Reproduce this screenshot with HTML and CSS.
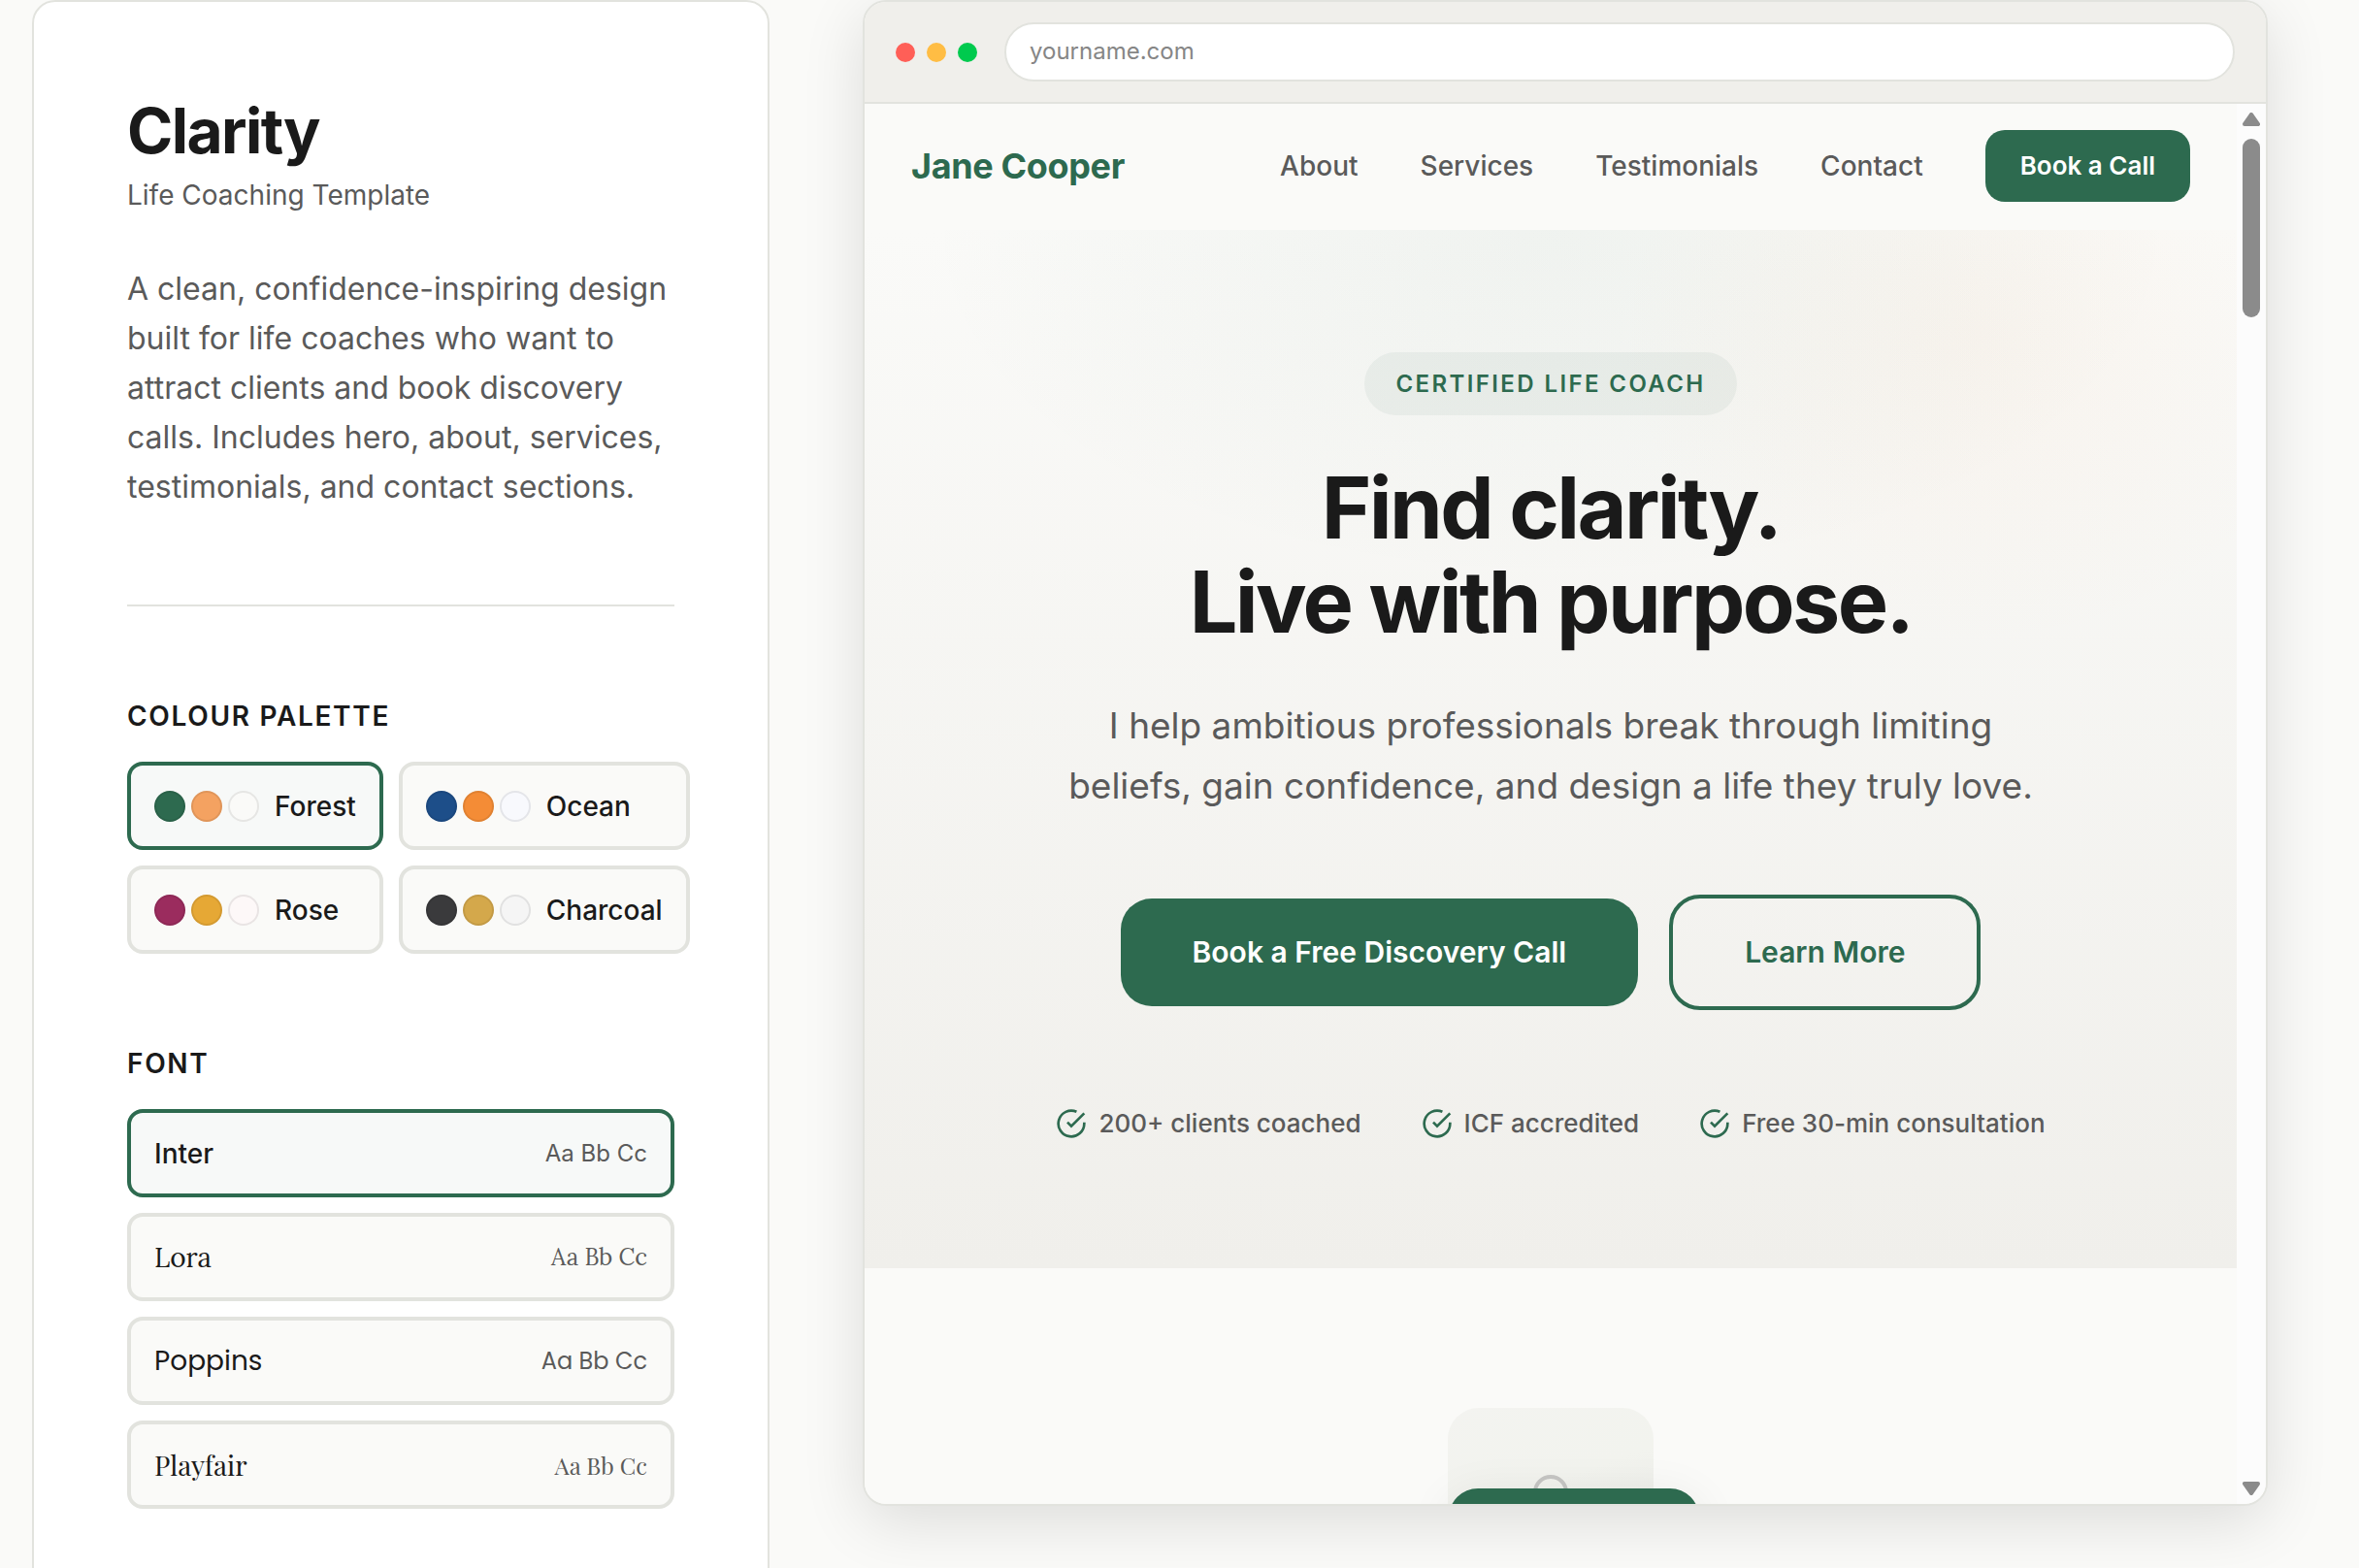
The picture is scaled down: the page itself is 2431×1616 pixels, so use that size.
FILE: index.html
```html
<!DOCTYPE html>
<html lang="en-GB">
<head>
<meta charset="utf-8">
<meta name="viewport" content="width=device-width, initial-scale=1">
<title>Clarity – Life Coaching Template</title>
<link rel="stylesheet" href="styles.css">
</head>
<body>
<main class="layout">
  <aside class="panel">
    <header class="intro">
      <h1 class="intro-title">Clarity</h1>
      <p class="intro-sub">Life Coaching Template</p>
      <p class="intro-text">A clean, confidence-inspiring design built for life coaches who want to attract clients and book discovery calls. Includes hero, about, services, testimonials, and contact sections.</p>
    </header>
    <section class="option-group">
      <h2 class="option-heading">Colour palette</h2>
      <div class="palettes">
        <button type="button" class="option is-active"><span class="swatches"><i class="swatch forest-1"></i><i class="swatch forest-2"></i><i class="swatch forest-3"></i></span>Forest</button>
        <button type="button" class="option"><span class="swatches"><i class="swatch ocean-1"></i><i class="swatch ocean-2"></i><i class="swatch ocean-3"></i></span>Ocean</button>
        <button type="button" class="option"><span class="swatches"><i class="swatch rose-1"></i><i class="swatch rose-2"></i><i class="swatch rose-3"></i></span>Rose</button>
        <button type="button" class="option"><span class="swatches"><i class="swatch charcoal-1"></i><i class="swatch charcoal-2"></i><i class="swatch charcoal-3"></i></span>Charcoal</button>
      </div>
    </section>
    <section class="option-group">
      <h2 class="option-heading">Font</h2>
      <div class="fonts">
        <button type="button" class="option font-option is-active">Inter<span class="sample">Aa Bb Cc</span></button>
        <button type="button" class="option font-option font-lora">Lora<span class="sample">Aa Bb Cc</span></button>
        <button type="button" class="option font-option font-poppins">Poppins<span class="sample">Aa Bb Cc</span></button>
        <button type="button" class="option font-option font-playfair">Playfair<span class="sample">Aa Bb Cc</span></button>
      </div>
    </section>
  </aside>

  <section class="browser" aria-label="Template preview">
    <div class="toolbar">
      <div class="dots"><i class="dot red"></i><i class="dot amber"></i><i class="dot green"></i></div>
      <input class="address" type="text" value="yourname.com" aria-label="Address" readonly>
    </div>
    <div class="viewport">
      <div class="site">
        <nav class="site-nav">
          <a class="logo" href="#">Jane Cooper</a>
          <div class="nav-links">
            <a href="#about">About</a>
            <a href="#services">Services</a>
            <a href="#testimonials">Testimonials</a>
            <a href="#contact">Contact</a>
            <a class="nav-cta" href="#book">Book a Call</a>
          </div>
        </nav>
        <header class="hero">
          <span class="badge">Certified Life Coach</span>
          <h2 class="hero-title">Find clarity.<br>Live with purpose.</h2>
          <p class="hero-text">I help ambitious professionals break through limiting beliefs, gain confidence, and design a life they truly love.</p>
          <div class="hero-actions">
            <a class="btn btn-primary" href="#book">Book a Free Discovery Call</a>
            <a class="btn btn-outline" href="#about">Learn More</a>
          </div>
          <ul class="trust">
            <li><svg class="check" viewBox="0 0 24 24" aria-hidden="true"><path d="M22 11.08V12a10 10 0 1 1-5.93-9.14"/><path d="M22 4 12 14.01l-3-3"/></svg>200+ clients coached</li>
            <li><svg class="check" viewBox="0 0 24 24" aria-hidden="true"><path d="M22 11.08V12a10 10 0 1 1-5.93-9.14"/><path d="M22 4 12 14.01l-3-3"/></svg>ICF accredited</li>
            <li><svg class="check" viewBox="0 0 24 24" aria-hidden="true"><path d="M22 11.08V12a10 10 0 1 1-5.93-9.14"/><path d="M22 4 12 14.01l-3-3"/></svg>Free 30-min consultation</li>
          </ul>
        </header>
        <section class="about" id="about">
          <div class="portrait">
            <svg viewBox="0 0 96 96" aria-hidden="true"><circle cx="48" cy="29" r="16"/><path d="M16 84v-8a16 16 0 0 1 16-16h32a16 16 0 0 1 16 16v8"/></svg>
          </div>
        </section>
      </div>
      <div class="scrollbar" aria-hidden="true">
        <svg class="arrow" viewBox="0 0 18 14"><path d="M9 2 16 12H2Z"/></svg>
        <div class="track"><div class="thumb"></div></div>
        <svg class="arrow" viewBox="0 0 18 14"><path d="M9 12 2 2h14Z"/></svg>
      </div>
      <button type="button" class="floating" aria-label="Use this template"></button>
    </div>
  </section>
</main>
</body>
</html>
```
FILE: styles.css
```css
:root {
  --green: #2d6a4f;
  --ink: #1a1a1a;
  --muted: #5a5a5a;
  --line: #e2e3de;
  --paper: #fafaf8;
  --sand: #f0efeb;
}

* { box-sizing: border-box; }

body {
  margin: 0;
  background: var(--paper);
  color: var(--ink);
  font-family: Inter, "Liberation Sans", sans-serif;
  -webkit-font-smoothing: antialiased;
}

h1, h2, p, ul { margin: 0; padding: 0; }
a { color: inherit; text-decoration: none; }
button, input { font: inherit; color: inherit; }

.layout {
  display: grid;
  grid-template-columns: 760px minmax(0, 1fr);
  align-items: start;
  gap: 96px;
  height: 100vh;
  overflow: hidden;
  padding: 0 94px 0 33px;
}

/* Settings panel */
.panel {
  display: flex;
  flex-direction: column;
  gap: 96px;
  padding: 96px;
  background: #fff;
  border: 2px solid var(--line);
  border-radius: 24px;
}

.intro {
  padding-bottom: 96px;
  border-bottom: 2px solid var(--line);
}
.intro-title {
  font-size: 64px;
  line-height: 74px;
  font-weight: 700;
  letter-spacing: -0.025em;
}
.intro-sub {
  margin-top: 7px;
  font-size: 28px;
  line-height: 45px;
  color: var(--muted);
}
.intro-text {
  margin-top: 48px;
  font-size: 32px;
  line-height: 51px;
  color: var(--muted);
}

.option-heading {
  margin-bottom: 30px;
  font-size: 28px;
  line-height: 34px;
  font-weight: 600;
  letter-spacing: 0.06em;
  text-transform: uppercase;
}
.palettes {
  display: grid;
  grid-template-columns: 1fr 1fr;
  gap: 16px;
}
.fonts {
  display: flex;
  flex-direction: column;
  gap: 16px;
}
.option {
  display: flex;
  align-items: center;
  gap: 16px;
  height: 91px;
  padding: 0 24px;
  background: var(--paper);
  border: 4px solid var(--line);
  border-radius: 16px;
  font-size: 28px;
  font-weight: 500;
}
.option.is-active {
  background: #f7f9f8;
  border-color: var(--green);
}
.font-option { justify-content: space-between; }
.sample {
  font-size: 24px;
  font-weight: 400;
  color: var(--muted);
}
.font-lora, .font-poppins, .font-playfair { font-weight: 400; }
.font-lora { font-family: Lora, "Liberation Serif", serif; }
.font-poppins { font-family: Poppins, "Noto Sans", sans-serif; }
.font-playfair { font-family: "Playfair Display", "Liberation Serif", serif; }

.swatches { display: flex; gap: 6px; }
.swatch {
  width: 32px;
  height: 32px;
  border: 2px solid rgba(0, 0, 0, 0.08);
  border-radius: 50%;
}
.forest-1 { background: #2d6a4f; }
.forest-2 { background: #f4a261; }
.forest-3 { background: #fafaf8; }
.ocean-1 { background: #1d4e89; }
.ocean-2 { background: #f48c36; }
.ocean-3 { background: #f8f9fd; }
.rose-1 { background: #9b2c5e; }
.rose-2 { background: #e6a835; }
.rose-3 { background: #fdf8f8; }
.charcoal-1 { background: #3a3a3c; }
.charcoal-2 { background: #d4a84b; }
.charcoal-3 { background: #f5f5f5; }

/* Browser frame */
.browser {
  display: flex;
  flex-direction: column;
  height: calc(100vh - 64px);
  overflow: hidden;
  background: var(--paper);
  border: 2px solid var(--line);
  border-radius: 24px;
  box-shadow: 0 16px 64px rgba(0, 0, 0, 0.12);
}
.toolbar {
  display: flex;
  align-items: center;
  gap: 28px;
  padding: 21px 32px;
  background: var(--sand);
  border-bottom: 2px solid var(--line);
}
.dots { display: flex; gap: 12px; }
.dot {
  width: 20px;
  height: 20px;
  border-radius: 50%;
}
.red { background: #ff5f57; }
.amber { background: #ffbd44; }
.green { background: #00ca4e; }
.address {
  flex: 1;
  min-width: 0;
  height: 61px;
  padding: 0 24px 2px;
  background: #fff;
  border: 2px solid var(--line);
  border-radius: 31px;
  font-size: 24px;
  color: #868686;
}
.viewport {
  position: relative;
  display: flex;
  flex: 1;
  min-height: 0;
  overflow: hidden;
}
.site {
  flex: 1;
  min-width: 0;
}

.site-nav {
  display: flex;
  align-items: center;
  justify-content: space-between;
  height: 130px;
  padding: 0 48px 2px;
  background: #fafaf8;
}
.logo {
  font-size: 36px;
  font-weight: 700;
  letter-spacing: -0.01em;
  color: var(--green);
}
.nav-links {
  display: flex;
  align-items: center;
  gap: 64px;
  font-size: 28px;
  font-weight: 500;
  color: var(--muted);
}
.nav-cta {
  padding: 0 36px;
  background: var(--green);
  border-radius: 20px;
  font-size: 26px;
  line-height: 74px;
  font-weight: 600;
  color: #fff;
}

.hero {
  display: flex;
  flex-direction: column;
  align-items: center;
  padding: 126px 48px 128px;
  background:
    radial-gradient(ellipse 46% 34% at 50% 0%, rgba(45, 106, 79, 0.05), transparent),
    radial-gradient(ellipse 26% 30% at 81% 10%, rgba(244, 162, 97, 0.06), transparent),
    linear-gradient(#fafaf8, #f0efeb);
  text-align: center;
}
.badge {
  padding: 0 32px;
  background: rgba(45, 106, 79, 0.06);
  border-radius: 33px;
  font-size: 24px;
  line-height: 65px;
  font-weight: 600;
  letter-spacing: 0.1em;
  text-transform: uppercase;
  color: var(--green);
}
.hero-title {
  margin-top: 47px;
  font-size: 88px;
  line-height: 97px;
  font-weight: 700;
  letter-spacing: -0.03em;
}
.hero-text {
  max-width: 1000px;
  margin-top: 48px;
  font-size: 37px;
  line-height: 62px;
  color: var(--muted);
}
.hero-actions {
  display: flex;
  align-items: center;
  gap: 32px;
  margin-top: 81px;
}
.btn {
  padding: 0 74px;
  border-radius: 32px;
  font-size: 30px;
  line-height: 111px;
  font-weight: 600;
}
.btn-primary {
  background: var(--green);
  color: #fff;
}
.btn-outline {
  border: 4px solid var(--green);
  color: var(--green);
}
.trust {
  display: flex;
  gap: 62px;
  margin-top: 96px;
  list-style: none;
  font-size: 26px;
  line-height: 42px;
  font-weight: 500;
  color: var(--muted);
}
.trust li {
  display: flex;
  align-items: center;
  gap: 12px;
}
.check {
  width: 32px;
  height: 32px;
  fill: none;
  stroke: var(--green);
  stroke-width: 2;
}

.about {
  display: flex;
  justify-content: center;
  padding-top: 144px;
  background: var(--paper);
}
.portrait {
  display: flex;
  align-items: center;
  justify-content: center;
  width: 212px;
  height: 212px;
  border-radius: 32px;
  background: linear-gradient(160deg, #f3f3f0, #f2f3ee 40%, #e6e6e3);
}
.portrait svg {
  width: 96px;
  height: 96px;
  fill: none;
  stroke: #c6c6c4;
  stroke-width: 4;
}
.floating {
  position: absolute;
  left: calc(50% - 120px);
  bottom: -68px;
  width: 258px;
  height: 84px;
  background: var(--green);
  border: 0;
  border-radius: 30px;
  box-shadow: 0 8px 48px rgba(0, 0, 0, 0.08);
}

.scrollbar {
  display: flex;
  flex-direction: column;
  align-items: center;
  gap: 13px;
  width: 30px;
  padding: 9px 0;
  background: #fcfcfc;
}
.track { flex: 1; }
.thumb {
  width: 18px;
  height: 184px;
  background: #8b8b8b;
  border-radius: 9px;
}
.arrow {
  width: 18px;
  height: 14px;
  fill: #8b8b8b;
  stroke: #8b8b8b;
  stroke-width: 4;
  stroke-linejoin: round;
}
```
